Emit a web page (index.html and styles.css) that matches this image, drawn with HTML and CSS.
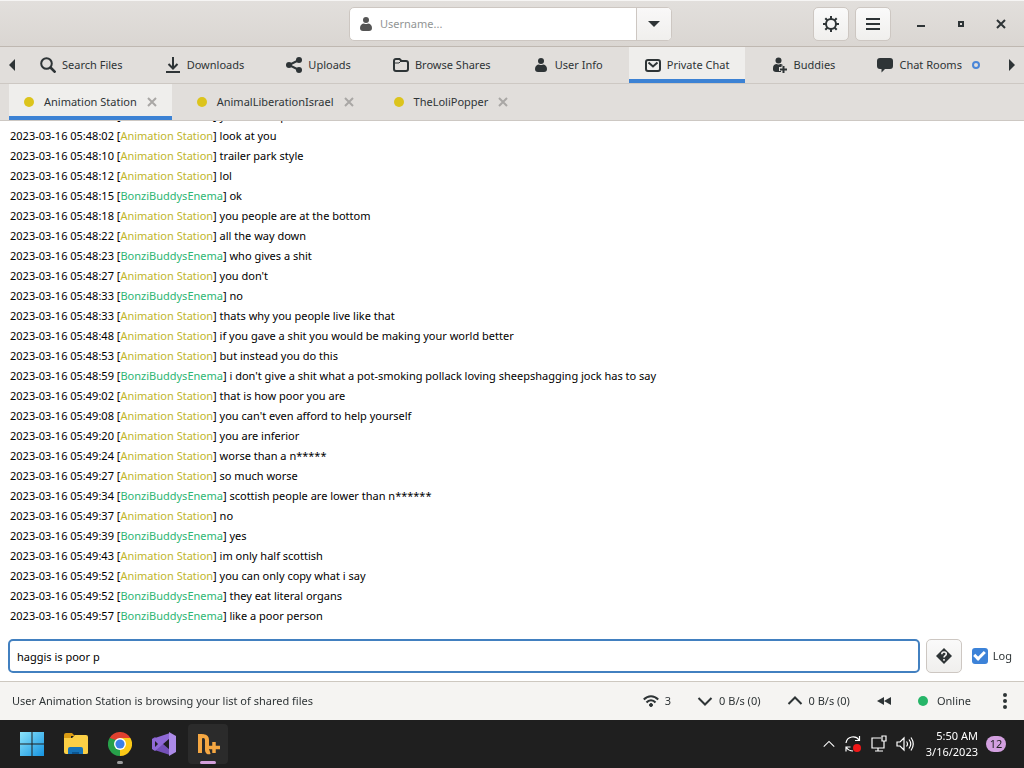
FILE: index.html
```html
<!DOCTYPE html>
<html lang="en">
  <head>
    <meta charset="UTF-8" />
    <meta name="viewport" content="width=device-width, initial-scale=1.0" />
    <title>Private Chat</title>
    <link rel="stylesheet" href="styles.css">
  </head>
  <body>
    <!-- Header Bar -->
    <header class="header-bar">
      <div class="header-side"></div>
      <div class="user-search">
        <svg class="icon user-icon" viewBox="0 0 16 16"><circle cx="8" cy="4" r="3"/><path d="M2 12c0-3 2-4.500 4-4.500 1.200.8 2.800.8 4 0 2 0 4 1.500 4 4.500 0 2-1 3-3 3H5c-2 0-3-1-3-3z"/></svg>
        <input type="text" class="user-input" placeholder="Username..." aria-label="Username">
        <button class="user-drop" aria-label="Show users">
          <svg class="icon" viewBox="0 0 16 16"><path d="M2 5h12l-6 6z"/></svg>
        </button>
      </div>
      <div class="header-side header-right">
        <button class="tool-button" aria-label="Preferences">
          <svg class="icon line" viewBox="0 0 16 16"><circle cx="8" cy="8" r="5"/><path d="M8 0v3M8 13v3M0 8h3M13 8h3M2.300 2.300l2 2M11.700 11.700l2 2M13.700 2.300l-2 2M4.300 11.700l-2 2"/></svg>
        </button>
        <button class="tool-button" aria-label="Menu">
          <svg class="icon" viewBox="0 0 16 16"><path d="M1 2h14v2H1zM1 7h14v2H1zM1 12h14v2H1z"/></svg>
        </button>
        <div class="window-buttons">
          <button aria-label="Minimize"><svg class="icon" viewBox="0 0 16 16"><path d="M4 9h8v2H4z"/></svg></button>
          <button aria-label="Maximize"><svg class="icon line" viewBox="0 0 16 16"><path d="M6 6h4v4H6z"/></svg></button>
          <button aria-label="Close"><svg class="icon line" viewBox="0 0 16 16"><path d="M4 4l8 8M12 4l-8 8"/></svg></button>
        </div>
      </div>
    </header>

    <!-- Main Tabs -->
    <nav class="main-tabs">
      <button class="scroll-arrow" aria-label="Scroll left"><svg class="icon" viewBox="0 0 16 16"><path d="M11 2v12L5 8z"/></svg></button>
      <div class="tab-list">
        <button class="tab">
          <svg class="icon line" viewBox="0 0 16 16"><circle cx="6.500" cy="6.500" r="5.300"/><path d="M10.500 10.500l5 5" stroke-width="2.600"/></svg>
          Search Files
        </button>
        <button class="tab">
          <svg class="icon line" viewBox="0 0 16 16"><path d="M8 0v11M3.500 7L8 11.500 12.500 7M1 15h14"/></svg>
          Downloads
        </button>
        <button class="tab">
          <svg class="icon" viewBox="0 0 16 16"><circle cx="3" cy="8" r="3"/><circle cx="13" cy="3" r="3"/><circle cx="13" cy="13" r="3"/><path d="M13 3L3 8l10 5" fill="none" stroke="currentColor" stroke-width="2"/></svg>
          Uploads
        </button>
        <button class="tab">
          <svg class="icon line" viewBox="0 0 16 16"><path d="M1 4c0-1.300.7-2 2-2h3.500l2 2H13c1.300 0 2 .7 2 2v6c0 1.300-.7 2-2 2H3c-1.300 0-2-.7-2-2z"/><path d="M2 6h4l2-2" stroke-width="1"/></svg>
          Browse Shares
        </button>
        <button class="tab">
          <svg class="icon" viewBox="0 0 16 16"><circle cx="8" cy="4" r="3"/><path d="M2 12c0-3 2-4.500 4-4.500 1.200.8 2.800.8 4 0 2 0 4 1.500 4 4.500 0 2-1 3-3 3H5c-2 0-3-1-3-3z"/></svg>
          User Info
        </button>
        <button class="tab active">
          <svg class="icon line" viewBox="0 0 16 16"><rect x="1" y="3" width="14" height="11" rx="2"/><path d="M3.500 5.500L8 9.500l4.500-4"/></svg>
          Private Chat
        </button>
        <button class="tab">
          <svg class="icon" viewBox="0 0 16 16"><circle cx="6.500" cy="3.500" r="3"/><path d="M1 11c0-2.500 1.500-4 4-4 1 .7 2 .7 3 0 1.500 0 2.500.5 3 1.500H9.500V10H7v4h2v1H4c-2 0-3-1-3-2.500z"/><path d="M11.500 9v7M8 12.500h7" fill="none" stroke="currentColor" stroke-width="2"/></svg>
          Buddies
        </button>
        <button class="tab">
          <svg class="icon" viewBox="0 0 16 16"><path d="M3 1h10c2 0 3 1 3 3v5c0 2-1 3-3 3H8l-3.500 3.500V12H3c-2 0-3-1-3-3V4c0-2 1-3 3-3z"/></svg>
          Chat Rooms
          <span class="unread-ring"></span>
        </button>
      </div>
      <button class="scroll-arrow" aria-label="Scroll right"><svg class="icon" viewBox="0 0 16 16"><path d="M5 2v12l6-6z"/></svg></button>
    </nav>

    <!-- Open Conversations -->
    <div class="chat-tabs">
      <div class="chat-tab active">
        <span class="dot away"></span>
        <button class="chat-name">Animation Station</button>
        <button class="chat-close" aria-label="Close Animation Station"><svg viewBox="0 0 10 10"><path d="M1 1l8 8M9 1L1 9"/></svg></button>
      </div>
      <div class="chat-tab">
        <span class="dot away"></span>
        <button class="chat-name">AnimalLiberationIsrael</button>
        <button class="chat-close" aria-label="Close AnimalLiberationIsrael"><svg viewBox="0 0 10 10"><path d="M1 1l8 8M9 1L1 9"/></svg></button>
      </div>
      <div class="chat-tab">
        <span class="dot away"></span>
        <button class="chat-name">TheLoliPopper</button>
        <button class="chat-close" aria-label="Close TheLoliPopper"><svg viewBox="0 0 10 10"><path d="M1 1l8 8M9 1L1 9"/></svg></button>
      </div>
    </div>

    <!-- Chat Log -->
    <main class="chat-log">
      <p><time>2023-03-16 05:48:00</time> [<span class="them">Animation Station</span>] you are deep</p>
      <p><time>2023-03-16 05:48:02</time> [<span class="them">Animation Station</span>] look at you</p>
      <p><time>2023-03-16 05:48:10</time> [<span class="them">Animation Station</span>] trailer park style</p>
      <p><time>2023-03-16 05:48:12</time> [<span class="them">Animation Station</span>] lol</p>
      <p><time>2023-03-16 05:48:15</time> [<span class="me">BonziBuddysEnema</span>] ok</p>
      <p><time>2023-03-16 05:48:18</time> [<span class="them">Animation Station</span>] you people are at the bottom</p>
      <p><time>2023-03-16 05:48:22</time> [<span class="them">Animation Station</span>] all the way down</p>
      <p><time>2023-03-16 05:48:23</time> [<span class="me">BonziBuddysEnema</span>] who gives a shit</p>
      <p><time>2023-03-16 05:48:27</time> [<span class="them">Animation Station</span>] you don't</p>
      <p><time>2023-03-16 05:48:33</time> [<span class="me">BonziBuddysEnema</span>] no</p>
      <p><time>2023-03-16 05:48:33</time> [<span class="them">Animation Station</span>] thats why you people live like that</p>
      <p><time>2023-03-16 05:48:48</time> [<span class="them">Animation Station</span>] if you gave a shit you would be making your world better</p>
      <p><time>2023-03-16 05:48:53</time> [<span class="them">Animation Station</span>] but instead you do this</p>
      <p><time>2023-03-16 05:48:59</time> [<span class="me">BonziBuddysEnema</span>] i don't give a shit what a pot-smoking pollack loving sheepshagging jock has to say</p>
      <p><time>2023-03-16 05:49:02</time> [<span class="them">Animation Station</span>] that is how poor you are</p>
      <p><time>2023-03-16 05:49:08</time> [<span class="them">Animation Station</span>] you can't even afford to help yourself</p>
      <p><time>2023-03-16 05:49:20</time> [<span class="them">Animation Station</span>] you are inferior</p>
      <p><time>2023-03-16 05:49:24</time> [<span class="them">Animation Station</span>] worse than a n*****</p>
      <p><time>2023-03-16 05:49:27</time> [<span class="them">Animation Station</span>] so much worse</p>
      <p><time>2023-03-16 05:49:34</time> [<span class="me">BonziBuddysEnema</span>] scottish people are lower than n******</p>
      <p><time>2023-03-16 05:49:37</time> [<span class="them">Animation Station</span>] no</p>
      <p><time>2023-03-16 05:49:39</time> [<span class="me">BonziBuddysEnema</span>] yes</p>
      <p><time>2023-03-16 05:49:43</time> [<span class="them">Animation Station</span>] im only half scottish</p>
      <p><time>2023-03-16 05:49:52</time> [<span class="them">Animation Station</span>] you can only copy what i say</p>
      <p><time>2023-03-16 05:49:52</time> [<span class="me">BonziBuddysEnema</span>] they eat literal organs</p>
      <p><time>2023-03-16 05:49:57</time> [<span class="me">BonziBuddysEnema</span>] like a poor person</p>
    </main>

    <!-- Message Entry -->
    <form class="entry-row">
      <input type="text" class="message-input" value="haggis is poor p" aria-label="Message" autofocus>
      <button type="button" class="help-button" aria-label="Chat commands">
        <svg class="icon" viewBox="0 0 16 16"><path d="M8 0l8 8-8 8-8-8z"/><path d="M5.800 6.200c0-3 4.500-2.800 4.500-.2C10.300 7.700 8 7.600 8 9.500M8 11v1.800" fill="none" stroke="#f3f2f1" stroke-width="1.600"/></svg>
      </button>
      <label class="log-toggle"><input type="checkbox" checked> Log</label>
    </form>

    <!-- Status Bar -->
    <footer class="status-bar">
      <span class="status-text">User Animation Station is browsing your list of shared files</span>
      <button class="status-item">
        <svg class="icon line" viewBox="0 0 16 16"><path d="M.8 6.500C5 2 11 2 15.200 6.500M3.500 9.500c2.500-3 6.500-3 9 0"/><circle cx="8" cy="12" r="1.500" fill="currentColor" stroke-width="1"/></svg>
        3
      </button>
      <button class="status-item">
        <svg class="icon line" viewBox="0 0 16 16"><path d="M1.500 5L8 11.500 14.500 5"/></svg>
        0 B/s (0)
      </button>
      <button class="status-item">
        <svg class="icon line" viewBox="0 0 16 16"><path d="M1.500 11L8 4.500 14.500 11"/></svg>
        0 B/s (0)
      </button>
      <button class="status-item" aria-label="Alternative speed limits">
        <svg class="icon" viewBox="0 0 16 16"><path d="M8 4v8L1 8zM15 4v8L8 8z"/></svg>
      </button>
      <button class="status-item online"><span class="dot"></span>Online</button>
      <button class="status-item" aria-label="More"><svg class="icon" viewBox="0 0 16 16"><circle cx="8" cy="2" r="2"/><circle cx="8" cy="8" r="2"/><circle cx="8" cy="14" r="2"/></svg></button>
    </footer>

    <!-- Taskbar -->
    <div class="taskbar">
      <div class="task-apps">
        <button class="task-app" aria-label="Start">
          <svg viewBox="0 0 24 24">
            <defs><linearGradient id="win" x1="0" y1="0" x2="24" y2="24" gradientUnits="userSpaceOnUse"><stop stop-color="#8be4fb"/><stop offset="1" stop-color="#1593e0"/></linearGradient></defs>
            <path d="M0 0h11.500v11.500H0zM12.500 0H24v11.500H12.500zM0 12.500h11.500V24H0zM12.500 12.500H24V24H12.500z" fill="url(#win)"/>
          </svg>
        </button>
        <button class="task-app" aria-label="File Explorer">
          <svg viewBox="0 0 24 24"><path d="M0 3q0-2 2-2h6l3 3h-4v5H0z" fill="#d99b13"/><path d="M0 6h8l3-3h11q2 0 2 2v16q0 1-2 1H2q-2 0-2-2z" fill="#fbcf45"/><path d="M4 22v-5q0-2 2-2h11q2 0 2 2v5z" fill="#1673b8"/><path d="M8 22v-2h7v2z" fill="#0c5590"/></svg>
        </button>
        <button class="task-app running" aria-label="Chrome">
          <svg viewBox="0 0 24 24"><path d="M12 12L1.600 6A12 12 0 0 1 22.400 6z" fill="#e0402f"/><path d="M12 12L22.400 6A12 12 0 0 1 12 24z" fill="#fbc917"/><path d="M12 12v12A12 12 0 0 1 1.600 6z" fill="#27a04a"/><path d="M12 6h10.400l-5.200 9z" fill="#fbc917"/><path d="M6.800 15L1.600 6 8 8z" fill="#27a04a"/><path d="M12 24l5.200-9-5.200 1z" fill="#fbc917"/><circle cx="12" cy="12" r="6" fill="#fff"/><circle cx="12" cy="12" r="4.600" fill="#3b7fe8"/></svg>
        </button>
        <button class="task-app" aria-label="Visual Studio">
          <svg viewBox="0 0 24 24"><path d="M0 7l3-2 15 13v5L1 17.500z" fill="#7450b8"/><path d="M0 7v10l3 2 15-13V1z" fill="#8f69d6"/><path d="M3 9v6l3-3z" fill="#1f1f1f"/><path d="M17 0l7 4v16l-7 4z" fill="#ac8be8"/><path d="M12.500 12L17 8v8z" fill="#1f1f1f"/></svg>
        </button>
        <button class="task-app running active" aria-label="Nicotine+">
          <svg viewBox="0 0 24 24"><path d="M4 21V2M4 7c0-4 7-4 7 1v10q0 3 3 2" fill="none" stroke="#f5a742" stroke-width="4"/><path d="M18 10v11M13 15.500h11" fill="none" stroke="#f5a742" stroke-width="3.500"/></svg>
        </button>
      </div>
      <div class="task-tray">
        <svg class="tray-icon chevron" viewBox="0 0 16 16"><path d="M2 11l6-6 6 6"/></svg>
        <svg class="tray-icon" viewBox="0 0 18 18"><path d="M2 8c1-7 10-8 13-3M15.500 1v4.500H11M2 16.500V12h4.500M2.500 12.500C4 15 6 16 9 16"/><circle cx="13" cy="13" r="4" fill="#f01818" stroke="none"/></svg>
        <svg class="tray-icon network" viewBox="0 0 18 18"><path d="M11 3H2v10h12V8M5 16h8M8 13v3M12 1h4v5h-4zM14 6v2"/></svg>
        <svg class="tray-icon" viewBox="0 0 18 18"><path d="M1 7v4h3l4 4V3L4 7zM10.500 6.500q2 2.500 0 5M13 4.500q3.500 4.500 0 9M15 2.500q4.500 6.500 0 13"/></svg>
        <div class="clock"><span>5:50 AM</span><span>3/16/2023</span></div>
        <span class="badge">12</span>
      </div>
    </div>
  </body>
</html>
```
FILE: styles.css
```css
* {
  margin: 0;
  padding: 0;
  box-sizing: border-box;
}

body {
  height: 100vh;
  display: flex;
  flex-direction: column;
  overflow: hidden;
  background: #fff;
  color: #2e3436;
  font-family: "Noto Sans", "Open Sans", sans-serif;
  font-size: 11px;
  line-height: 20px;
}

button,
input {
  font: inherit;
  color: inherit;
}

button {
  border: none;
  background: none;
}

svg {
  display: block;
}

.icon {
  width: 16px;
  height: 16px;
  flex: none;
  fill: currentColor;
}

.icon.line {
  fill: none;
  stroke: currentColor;
  stroke-width: 2;
}

/* Header Bar */
.header-bar {
  flex: none;
  height: 47px;
  display: flex;
  align-items: center;
  background: linear-gradient(#e2dfdc, #dad6d2);
  border-top: 1px solid #f6f5f4;
  border-bottom: 1px solid #bfb8b1;
}

.header-side {
  flex: 1;
}

.header-right {
  display: flex;
  justify-content: flex-end;
  align-items: center;
  gap: 6px;
  padding-right: 3px;
}

.user-search {
  display: flex;
  align-items: center;
  width: 323px;
  height: 34px;
  background: #fff;
  border: 1px solid #cdc7c2;
  border-radius: 5px;
  overflow: hidden;
}

.user-icon {
  margin-left: 8px;
  color: #555;
}

.user-input {
  flex: 1;
  min-width: 0;
  height: 100%;
  padding: 0 6px;
  border: none;
  outline: none;
}

.user-input::placeholder {
  color: #929595;
}

.user-drop {
  display: flex;
  justify-content: center;
  align-items: center;
  width: 35px;
  height: 100%;
  border-left: 1px solid #cdc7c2;
  background: linear-gradient(#f9f8f8, #f0efed);
}

.tool-button,
.help-button {
  display: flex;
  justify-content: center;
  align-items: center;
  width: 36px;
  height: 34px;
  border: 1px solid #cdc7c2;
  border-radius: 5px;
  background: linear-gradient(#fafafa, #f0efed);
}

.window-buttons {
  display: flex;
  padding-left: 4px;
}

.window-buttons button {
  display: flex;
  justify-content: center;
  width: 40px;
}

/* Main Tabs */
.main-tabs {
  flex: none;
  display: flex;
  height: 37px;
  background: #e1dedb;
  border-bottom: 1px solid #cdc8c3;
}

.scroll-arrow {
  display: flex;
  justify-content: center;
  align-items: center;
  width: 24px;
}

.tab-list {
  flex: 1;
  display: flex;
  justify-content: space-between;
  padding-right: 4px;
}

.tab {
  display: flex;
  align-items: center;
  gap: 6px;
  padding: 0 16px;
  white-space: nowrap;
}

.tab.active,
.chat-tab.active {
  background: #efeeec;
  box-shadow: inset 0 -4px #3c82d4;
}

.unread-ring {
  width: 8px;
  height: 8px;
  margin-left: 4px;
  border: 2px solid #4a86d8;
  border-radius: 50%;
}

/* Open Conversations */
.chat-tabs {
  flex: none;
  display: flex;
  gap: 10px;
  height: 37px;
  padding-left: 9px;
  background: #e1dedb;
  border-bottom: 1px solid #cdc8c3;
}

.chat-tab {
  display: flex;
  align-items: center;
  padding: 0 15px;
}

.dot {
  width: 10px;
  height: 10px;
  border-radius: 50%;
  background: #26b568;
}

.dot.away {
  background: #dcc41c;
}

.chat-name {
  padding: 0 10px;
}

.chat-close svg {
  width: 10px;
  height: 10px;
  fill: none;
  stroke: #a9a7a5;
  stroke-width: 2;
}

/* Chat Log */
.chat-log {
  flex: 1;
  min-height: 0;
  display: flex;
  flex-direction: column;
  justify-content: flex-end;
  overflow: hidden;
  padding: 0 10px 5px;
  color: #000;
}

.chat-log p {
  flex: none;
}

.them {
  color: #c0b62c;
}

.me {
  color: #2db673;
}

/* Message Entry */
.entry-row {
  flex: none;
  display: flex;
  align-items: center;
  gap: 6px;
  padding: 8px 12px 8px 8px;
}

.message-input {
  flex: 1;
  height: 34px;
  padding: 0 7px;
  border: 2px solid #4280c0;
  border-radius: 5px;
  outline: none;
  color: #000;
}

.log-toggle {
  display: flex;
  align-items: center;
  gap: 5px;
  padding-left: 4px;
}

.log-toggle input {
  appearance: none;
  display: flex;
  justify-content: center;
  width: 16px;
  height: 16px;
  border-radius: 3px;
  background: #3c82d8;
}

.log-toggle input:checked::before {
  content: "";
  width: 11px;
  height: 7px;
  margin-top: 3px;
  border: solid #fff;
  border-width: 0 0 3px 3px;
  box-sizing: border-box;
  transform: rotate(-45deg);
}

/* Status Bar */
.status-bar {
  flex: none;
  display: flex;
  align-items: center;
  gap: 26px;
  height: 39px;
  padding: 0 11px 0 12px;
  background: #f5f4f2;
  border-top: 1px solid #cdc8c0;
}

.status-text {
  flex: 1;
}

.status-item {
  display: flex;
  align-items: center;
  gap: 6px;
}

.status-item.online {
  gap: 9px;
}

/* Taskbar */
.taskbar {
  flex: none;
  display: flex;
  justify-content: space-between;
  height: 48px;
  padding: 0 18px 0 12px;
  background: #1f1f1f;
  color: #fff;
}

.task-apps,
.task-tray {
  display: flex;
  align-items: center;
}

.task-apps {
  gap: 4px;
}

.task-app {
  position: relative;
  display: flex;
  justify-content: center;
  align-items: center;
  width: 40px;
  height: 40px;
  border-radius: 4px;
}

.task-app svg {
  width: 24px;
  height: 24px;
}

.task-app.active {
  background: #2b2b2b;
}

.task-app.running::after {
  content: "";
  position: absolute;
  bottom: 0;
  width: 6px;
  height: 3px;
  border-radius: 2px;
  background: #9c9c9c;
}

.task-app.active::after {
  width: 16px;
  background: #d3a0dc;
}

.task-tray {
  gap: 8px;
}

.tray-icon {
  width: 18px;
  height: 18px;
  fill: none;
  stroke: #fff;
  stroke-width: 1.2;
}

.tray-icon.chevron {
  width: 14px;
}

.clock {
  display: flex;
  flex-direction: column;
  padding-left: 4px;
  text-align: right;
  font-size: 11px;
  line-height: 16px;
}

.badge {
  width: 20px;
  border-radius: 8px;
  background: #d3a0e0;
  color: #222;
  line-height: 16px;
  text-align: center;
}
```
